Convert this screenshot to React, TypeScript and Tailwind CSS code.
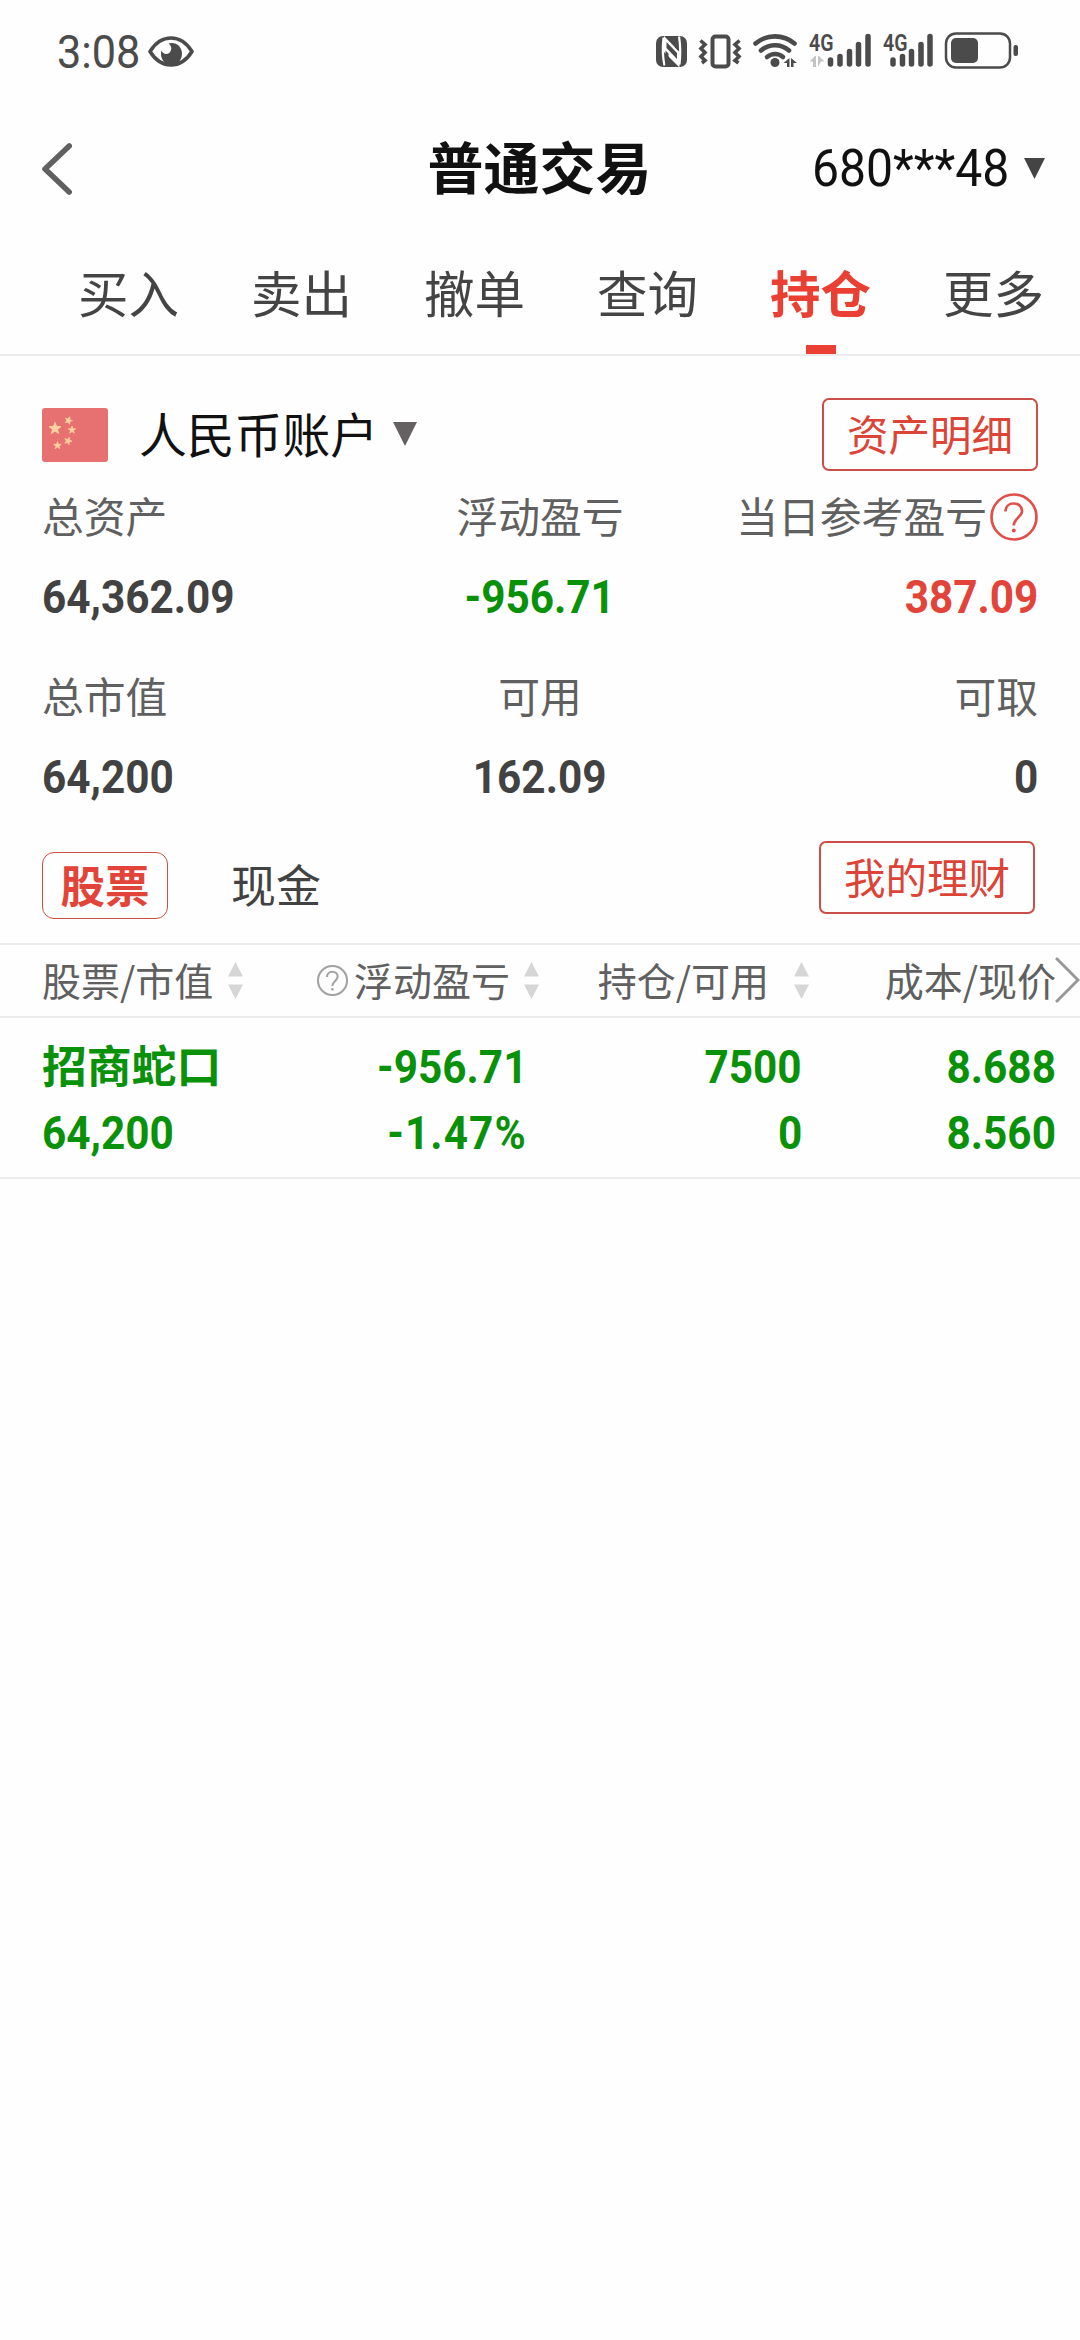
import type { ReactNode } from 'react';

interface StatProps {
  label: string;
  value: string;
  align: 'left' | 'center' | 'right';
  color?: string;
  icon?: ReactNode;
}

const tabs = ['买入', '卖出', '撤单', '查询', '持仓', '更多'];

const itemsAlign = {
  left: 'items-start',
  center: 'items-center',
  right: 'items-end',
};

const originAlign = {
  left: 'origin-left',
  center: 'origin-center',
  right: 'origin-right',
};

function Num({ children, align = 'right', className = '' }: { children: ReactNode; align?: 'left' | 'center' | 'right'; className?: string }) {
  return (
    <span className={`inline-block scale-x-[0.92] font-['Roboto',sans-serif] text-[46px] font-bold leading-[66px] ${originAlign[align]} ${className}`}>
      {children}
    </span>
  );
}

function Stat({ label, value, align, color = 'text-[#424242]', icon }: StatProps) {
  return (
    <div className={`flex flex-1 flex-col whitespace-nowrap ${itemsAlign[align]}`}>
      <div className="flex h-[60px] items-center pt-px text-[41.8px] text-[#606060]">
        <span>{label}</span>
        {icon}
      </div>
      <div className="mt-[19px] flex h-[66px] items-center">
        <Num align={align} className={color}>{value}</Num>
      </div>
    </div>
  );
}

function HelpIcon({ size, color, stroke }: { size: number; color: string; stroke: number }) {
  return (
    <svg width={size} height={size} viewBox="0 0 48 48" fill="none" stroke={color} strokeWidth={stroke} className="shrink-0">
      <circle cx="24" cy="24" r="22.5" />
      <path d="M15.500 18.500c0-5 3.500-8 8.200-8s8.300 3 8.300 7.500c0 6-8.300 7.500-8.300 14.500" />
      <circle cx="23.800" cy="37.500" r="2" fill={color} stroke="none" />
    </svg>
  );
}

function SortIcon() {
  return (
    <svg width="15" height="37" viewBox="0 0 15 37" fill="#d6d6d6" className="shrink-0">
      <path d="M7.500 0 15 14.500H0z" />
      <path d="M7.500 37 15 22.500H0z" />
    </svg>
  );
}

function TriangleDown({ width, height, color }: { width: number; height: number; color: string }) {
  return (
    <svg width={width} height={height} viewBox="0 0 20 20" preserveAspectRatio="none" fill={color} className="shrink-0">
      <path d="M0 0h20L10 20z" />
    </svg>
  );
}

function ChinaFlag() {
  const star = 'M0-5 1.200-1.600 4.800-1.500 1.900.6 2.900 4 0 2-2.900 4-1.900.6-4.800-1.500-1.200-1.600z';
  return (
    <svg width="66" height="54" viewBox="0 0 66 54" className="shrink-0">
      <rect width="66" height="54" rx="3" fill="#e77170" />
      <g fill="#fbd3a0" stroke="#fbd3a0" strokeWidth="0.8">
        <path d={star} transform="translate(13 20.500) scale(1.250)" />
        <path d={star} transform="translate(26.500 12.500) scale(.8) rotate(20)" />
        <path d={star} transform="translate(30 22) scale(.8)" />
        <path d={star} transform="translate(26 33) scale(.8) rotate(20)" />
        <path d={star} transform="translate(15.500 37.500) scale(.8)" />
      </g>
    </svg>
  );
}

function StatusIcons() {
  return (
    <svg width="368" height="44" viewBox="652 28 368 44" fill="#4b4b4b">
      {/* nfc */}
      <rect x="656" y="36" width="31" height="31" rx="7" />
      <path d="M663.500 37.500c-1 9-1 19 1 28M679 36.500c1.500 9 1.500 19 .5 28" stroke="#fff" strokeWidth="2.200" fill="none" />
      <path d="M664 36 679.500 52v15.500L664 52z" fill="#fff" />
      <path d="M666.500 42 677 53v6L666.500 48zM665.500 50.500l3 3v9l6 4.500h-9zM674 36h4v14.500l-3-3V40l-4-4z" />
      {/* vibrate */}
      <rect x="712.500" y="36.500" width="16" height="30" rx="3" fill="none" stroke="#4b4b4b" strokeWidth="4" />
      <path d="M700.500 40.500l4.500 4-4 4 4 4-4 4 4 4-3 2.500M739.500 40.500l-4.500 4 4 4-4 4 4 4-4 4 3.500 2.500" fill="none" stroke="#4b4b4b" strokeWidth="3.600" />
      {/* wifi */}
      <g fill="none" stroke="#4b4b4b" strokeWidth="4.600" strokeLinecap="round">
        <path d="M755.500 43.500c11-9.500 28-9.500 39 0" />
        <path d="M761 50.500c8-7 20-7 28 0" />
        <path d="M767 57c5-4 11.500-4 16 0" />
      </g>
      <circle cx="775" cy="62.500" r="4.500" />
      <path d="M783.500 63 789.500 58v9h-2.500v-4zM791 58l6 5h-3.500v4H791z" />
      {/* sim 1 */}
      <text x="809" y="50.500" fontSize="23" fontWeight="600" fontFamily="Roboto, sans-serif" textLength="24.500" lengthAdjust="spacingAndGlyphs">4G</text>
      <path d="M809.500 61.500 815 56h1v11h-3v-5.500zM818 56h1l5.500 5.500h-3.500l-3 5.500z" fill="#c4c4c4" />
      <g stroke="#4b4b4b" strokeWidth="5.500" strokeLinecap="round">
        <path d="M830.500 60v4M840 56.500v7.500M849.500 51.500V64M858.500 44.500V64M868 36.500V64" />
        {/* sim 2 */}
        <path d="M893 60v4M902.500 56.500v7.500M911.500 51.500V64M921 44.500V64M930 36.500V64" />
      </g>
      <text x="883" y="50.500" fontSize="23" fontWeight="600" fontFamily="Roboto, sans-serif" textLength="24.500" lengthAdjust="spacingAndGlyphs">4G</text>
      {/* battery */}
      <rect x="946" y="33.500" width="64" height="34" rx="10" fill="none" stroke="#4b4b4b" strokeWidth="2.500" />
      <rect x="951" y="38" width="27" height="25" rx="5" />
      <rect x="1013.500" y="45" width="4.500" height="11" rx="2" />
    </svg>
  );
}

function StatusBar() {
  return (
    <header className="flex h-[100px] items-center pl-[57px] pr-[60px]">
      <span className="mt-[4px] origin-left scale-x-[0.94] font-['Roboto',sans-serif] text-[46px] leading-none text-[#4b4b4b]">3:08</span>
      <svg width="46" height="31" viewBox="0 0 46 31" className="ml-[2px] mt-[3px]" fill="none">
        <path d="M2 15.500C7 7.500 14 2 23 2s16 5.500 21 13.500c-5 8-12 13.500-21 13.500S7 23.500 2 15.500z" stroke="#4b4b4b" strokeWidth="3.600" strokeLinejoin="round" />
        <path d="M20.500 7.500c7-2.500 13.500 3 13.500 10 0 6.500-4.500 11.500-10.500 11.500S13 24 13 18c0-1 .2-2.500.6-3.500 1 3.500 5 4.500 7.500 2.500s3.500-6.500-.6-9.500z" fill="#4b4b4b" />
      </svg>
      <div className="ml-auto">
        <StatusIcons />
      </div>
    </header>
  );
}

function TitleBar() {
  return (
    <div className="grid h-[137px] grid-cols-3 items-center pl-[42px] pr-[35px]">
      <svg width="30" height="52" viewBox="0 0 30 52" fill="none" stroke="#606060" strokeWidth="5.500" strokeLinecap="round" strokeLinejoin="round">
        <path d="M27.200 3 3 26l24.200 23" />
      </svg>
      <h1 className="-mt-[7px] whitespace-nowrap pr-[8px] text-center text-[56px] font-bold leading-none text-[#111]">普通交易</h1>
      <div className="flex items-center justify-end">
        <span className="origin-right scale-x-[0.925] font-['Roboto',sans-serif] text-[52px] leading-none text-[#111]">680***48</span>
        <span className="ml-[15px]">
          <TriangleDown width={21} height={21} color="#444" />
        </span>
      </div>
    </div>
  );
}

function RedButton({ children }: { children: ReactNode }) {
  return (
    <button className="flex h-[73px] w-[216px] items-center justify-center rounded-[7px] border-2 border-[#cb4f49] pb-[2px] text-[41.5px] leading-none text-[#dc4437]">
      {children}
    </button>
  );
}

export default function App() {
  return (
    <div className="flex h-[2340px] w-[1080px] flex-col overflow-hidden bg-[#fefefe] font-['Noto_Sans_CJK_SC',sans-serif]">
      <StatusBar />
      <TitleBar />

      {/* Trade tabs */}
      <nav className="flex h-[119px] border-b-2 border-[#ebebed] pl-[42px]">
        {tabs.map((tab) => (
          <div key={tab} className="flex w-[173px] shrink-0 flex-col items-center justify-between">
            <span className={`pt-[16px] text-[50.5px] leading-[76px] ${tab === '持仓' ? 'font-bold text-[#ea4033]' : 'text-[#444]'}`}>{tab}</span>
            {tab === '持仓' && <span className="h-[9px] w-[30px] bg-[#ea4033]" />}
          </div>
        ))}
      </nav>

      {/* Account summary */}
      <section className="px-[42px] pt-[42px]">
        <div className="flex h-[73px] items-center">
          <ChinaFlag />
          <span className="-mt-[4px] ml-[31px] text-[47.8px] leading-none text-[#111]">人民币账户</span>
          <span className="-mt-px ml-[15px]">
            <TriangleDown width={24} height={24} color="#656163" />
          </span>
          <div className="ml-auto">
            <RedButton>资产明细</RedButton>
          </div>
        </div>
        <div className="mt-[14px] flex">
          <Stat label="总资产" value="64,362.09" align="left" />
          <Stat label="浮动盈亏" value="-956.71" align="center" color="text-[#099109]" />
          <Stat
            label="当日参考盈亏"
            value="387.09"
            align="right"
            color="text-[#e2443a]"
            icon={<span className="ml-[3px] mt-[3px]"><HelpIcon size={48} color="#e0504a" stroke={2.7} /></span>}
          />
        </div>
        <div className="mt-[35px] flex">
          <Stat label="总市值" value="64,200" align="left" />
          <Stat label="可用" value="162.09" align="center" />
          <Stat label="可取" value="0" align="right" />
        </div>
      </section>

      {/* Stock / cash switch */}
      <div className="mt-[31px] flex h-[102px] pl-[42px] pr-[45px]">
        <button className="mt-[11px] flex h-[67px] w-[126px] items-center justify-center rounded-xl border border-[#cb4f49] pb-[3px] text-[44.5px] font-bold leading-none text-[#e2443a]">股票</button>
        <button className="ml-[63px] mt-[11px] h-[67px] pb-[4px] text-[45px] leading-none text-[#424242]">现金</button>
        <div className="ml-auto">
          <RedButton>我的理财</RedButton>
        </div>
      </div>

      {/* Holdings table */}
      <div className="flex h-[75px] items-center whitespace-nowrap border-y-2 border-[#ececec] pb-px pl-[42px] text-[39px] leading-none text-[#606060]">
        <div className="flex w-[276px] items-center">
          <span className="-mt-[2px]">股票/市值</span>
          <span className="ml-[15px]"><SortIcon /></span>
        </div>
        <div className="flex w-[282px] items-center">
          <HelpIcon size={31} color="#a3a3a3" stroke={3.2} />
          <span className="-mt-[2px] ml-[6px]">浮动盈亏</span>
          <span className="ml-[14px]"><SortIcon /></span>
        </div>
        <div className="flex w-[288px] items-center">
          <span className="-mt-[2px]">持仓/可用</span>
          <span className="ml-[25px]"><SortIcon /></span>
        </div>
        <span className="-mt-[2px]">成本/现价</span>
        <svg width="25" height="46" viewBox="0 0 25 46" fill="none" stroke="#999" strokeWidth="3" className="-ml-px shrink-0">
          <path d="M1 1l22 22L1 45" />
        </svg>
      </div>
      <div className="flex h-[161px] border-b-2 border-[#ececec] pl-[42px] pr-[24px] pt-[16px] text-[#099109]">
        <div className="flex w-[200px] flex-col items-start">
          <span className="mb-[6px] text-[44.8px] font-bold leading-[60px]">招商蛇口</span>
          <Num align="left">64,200</Num>
        </div>
        <div className="flex w-[285px] flex-col items-end">
          <Num>-956.71</Num>
          <Num className="tracking-[1.2px]">-1.47%</Num>
        </div>
        <div className="flex w-[275px] flex-col items-end">
          <Num>7500</Num>
          <Num>0</Num>
        </div>
        <div className="flex flex-1 flex-col items-end">
          <Num>8.688</Num>
          <Num>8.560</Num>
        </div>
      </div>
    </div>
  );
}
